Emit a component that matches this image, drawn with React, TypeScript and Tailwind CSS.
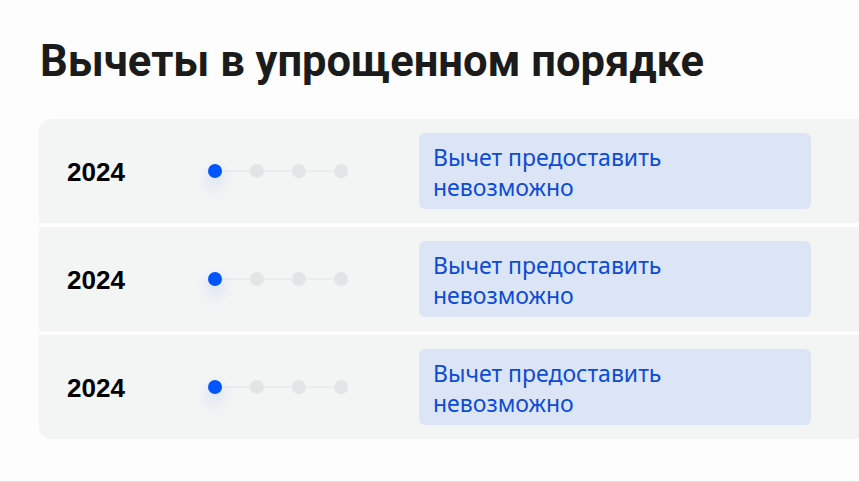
const rows = [{ year: "2024" }, { year: "2024" }, { year: "2024" }];

function Stepper() {
  return (
    <div className="relative flex w-[140px] items-center">
      <div className="absolute left-[7px] right-[7px] top-1/2 h-px -translate-y-1/2 bg-[#e2e3e5]" />
      <div className="relative flex w-full justify-between">
        <span className="h-[14px] w-[14px] rounded-full bg-[#0055ff] shadow-[0_6px_14px_rgba(0,85,255,0.16),0_20px_24px_rgba(80,100,200,0.06)]" />
        <span className="h-[14px] w-[14px] rounded-full bg-[#e3e4e6]" />
        <span className="h-[14px] w-[14px] rounded-full bg-[#e3e4e6]" />
        <span className="h-[14px] w-[14px] rounded-full bg-[#e3e4e6]" />
      </div>
    </div>
  );
}

export default function App() {
  return (
    <div className="h-[482px] w-[859px] overflow-hidden border-b border-[#e0e0e0] bg-[#fdfdfd]">
      <div className="pl-[39px] pt-[37px]">
        <h1 className="pl-px text-[43.5px] font-bold leading-[50px] text-[#1b1b1b] [font-family:Roboto,sans-serif]">
          Вычеты в упрощенном порядке
        </h1>
        <div className="mt-[32px] flex flex-col gap-[4px] overflow-hidden rounded-l-[12px]">
          {rows.map((row, i) => (
            <div key={i} className="flex h-[104px] items-center bg-[#f3f4f4] pl-[28px]">
              <div className="w-[141px] pt-[3px] text-[26px] font-bold text-black [font-family:'Liberation_Sans',Arial,sans-serif]">
                {row.year}
              </div>
              <Stepper />
              <div className="ml-[71px] w-[392px] rounded-[6px] bg-[#dce5f6] px-[14px] pb-[7px] pt-[9px] text-[23px] leading-[30px] text-[#0b4bd6] [font-family:'Noto_Sans',sans-serif]">
                Вычет предоставить
                <br />
                невозможно
              </div>
            </div>
          ))}
        </div>
      </div>
    </div>
  );
}
